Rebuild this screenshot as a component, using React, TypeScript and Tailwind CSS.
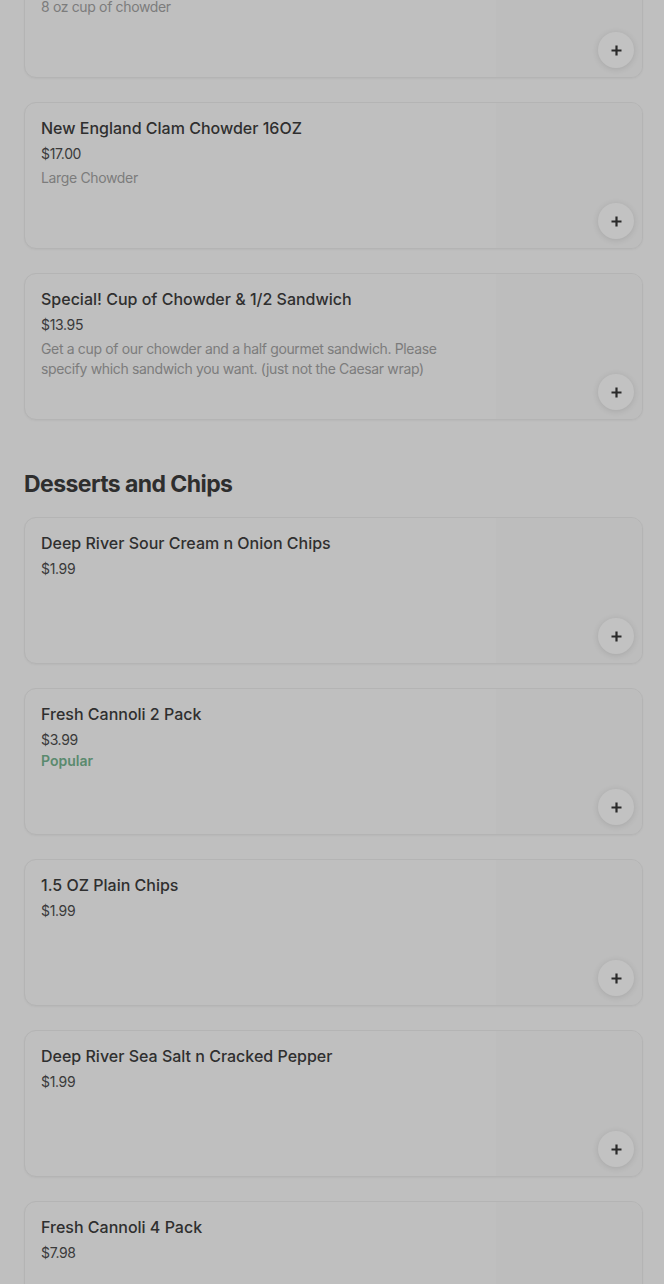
const font = { fontFamily: "Inter, 'Noto Sans', sans-serif" };

type Item = {
  name: string;
  price: string;
  desc?: string;
  popular?: boolean;
  cropped?: boolean;
};

// first card sits mostly above the fold, only its description shows
const chowder: Item[] = [
  { name: "New England Clam Chowder 8OZ", price: "$9.50", desc: "8 oz cup of chowder", cropped: true },
  { name: "New England Clam Chowder 16OZ", price: "$17.00", desc: "Large Chowder" },
  {
    name: "Special! Cup of Chowder & 1/2 Sandwich",
    price: "$13.95",
    desc: "Get a cup of our chowder and a half gourmet sandwich. Please specify which sandwich you want. (just not the Caesar wrap)",
  },
];

const desserts: Item[] = [
  { name: "Deep River Sour Cream n Onion Chips", price: "$1.99" },
  { name: "Fresh Cannoli 2 Pack", price: "$3.99", popular: true },
  { name: "1.5 OZ Plain Chips", price: "$1.99" },
  { name: "Deep River Sea Salt n Cracked Pepper", price: "$1.99" },
  { name: "Fresh Cannoli 4 Pack", price: "$7.98" },
];

function PlusButton() {
  return (
    <button className="absolute bottom-[9px] right-[8px] flex h-9 w-9 items-center justify-center rounded-full bg-[#c2c2c2] shadow-[0_1px_6px_rgba(0,0,0,0.12)]">
      <svg width="13" height="13" viewBox="0 0 13 13">
        <path d="M6.5 1.5v10M1.5 6.5h10" stroke="#2a2a2a" strokeWidth="2.2" />
      </svg>
    </button>
  );
}

function Card({ item }: { item: Item }) {
  return (
    <div className="relative flex h-[147px] overflow-hidden rounded-xl border border-[#b4b4b4] bg-[#bfbfbf] shadow-[0_1px_2px_rgba(0,0,0,0.04)]">
      <div className="flex-1 px-4 pt-[15px]">
        {item.cropped ? (
          <div className="h-[46px]" />
        ) : (
          <>
            <div className="text-[16px] leading-5 font-medium text-[#2f2f2f]">{item.name}</div>
            <div className="mt-[6px] text-[14px] leading-5 tracking-tight text-[#3a3a3a]">{item.price}</div>
          </>
        )}
        {item.desc && (
          <div className="mt-1 max-w-[420px] text-[14px] leading-5 tracking-tight text-[#7c7c7c]">
            {item.desc}
          </div>
        )}
        {item.popular && (
          <div className="mt-[1px] text-[14px] leading-5 font-semibold text-[#5a8a6e]">Popular</div>
        )}
      </div>
      <div className="w-[146px] shrink-0 bg-[#bdbdbd]" />
      <PlusButton />
    </div>
  );
}

export default function App() {
  return (
    <div className="h-[1284px] overflow-hidden bg-[#bfbfbf]" style={font}>
      <div className="mt-[-69px] pl-6 pr-[21px]">
        <div className="flex flex-col gap-6">
          {chowder.map((it) => (
            <Card key={it.name} item={it} />
          ))}
        </div>
        <h2 className="mt-12 mb-[17px] text-[23px] leading-8 font-bold tracking-tight text-[#2e2e2e]">
          Desserts and Chips
        </h2>
        <div className="flex flex-col gap-6">
          {desserts.map((it) => (
            <Card key={it.name} item={it} />
          ))}
        </div>
      </div>
    </div>
  );
}
